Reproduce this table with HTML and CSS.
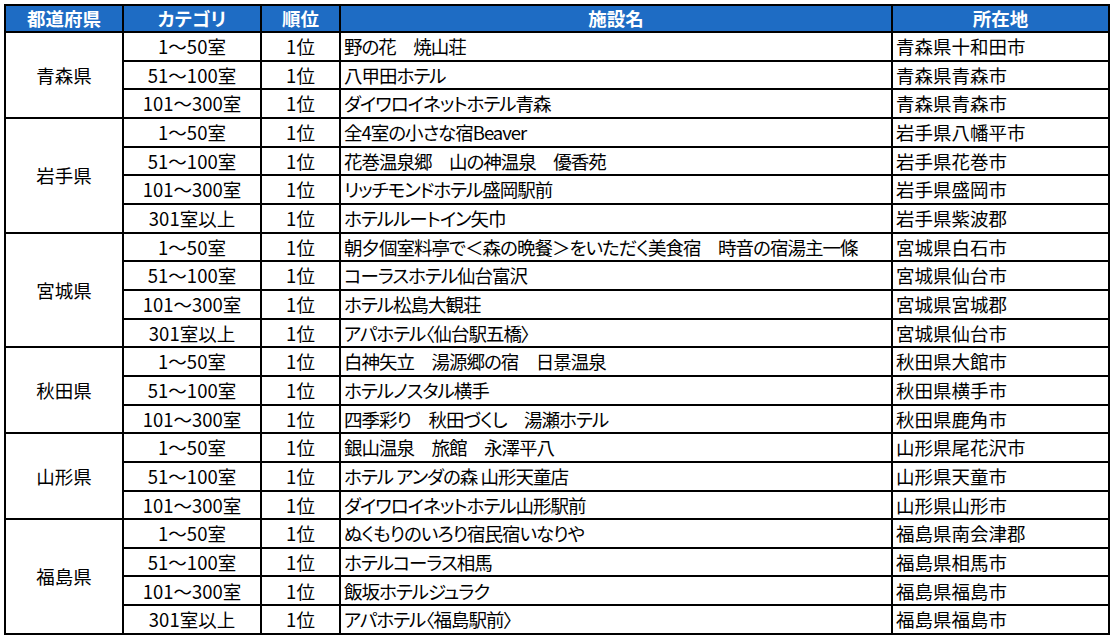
FILE: index.html
```html
<!DOCTYPE html>
<html lang="ja">
<head>
<meta charset="utf-8">
<title>都道府県別ランキング</title>
<link rel="stylesheet" href="styles.css">
</head>
<body>
<table class="rank">
  <colgroup>
    <col class="c-pref"><col class="c-cat"><col class="c-rank"><col class="c-name"><col class="c-loc">
  </colgroup>
  <thead>
    <tr><th>都道府県</th><th>カテゴリ</th><th>順位</th><th>施設名</th><th>所在地</th></tr>
  </thead>
  <tbody>
    <tr><td class="pref" rowspan="3">青森県</td><td class="ctr">1～50室</td><td class="ctr">1位</td><td class="txt name">野の花　焼山荘</td><td class="txt">青森県十和田市</td></tr>
    <tr><td class="ctr">51～100室</td><td class="ctr">1位</td><td class="txt name">八甲田ホテル</td><td class="txt">青森県青森市</td></tr>
    <tr><td class="ctr">101～300室</td><td class="ctr">1位</td><td class="txt name">ダイワロイネットホテル青森</td><td class="txt">青森県青森市</td></tr>

    <tr><td class="pref" rowspan="4">岩手県</td><td class="ctr">1～50室</td><td class="ctr">1位</td><td class="txt name">全4室の小さな宿Beaver</td><td class="txt">岩手県八幡平市</td></tr>
    <tr><td class="ctr">51～100室</td><td class="ctr">1位</td><td class="txt name">花巻温泉郷　山の神温泉　優香苑</td><td class="txt">岩手県花巻市</td></tr>
    <tr><td class="ctr">101～300室</td><td class="ctr">1位</td><td class="txt name">リッチモンドホテル盛岡駅前</td><td class="txt">岩手県盛岡市</td></tr>
    <tr><td class="ctr">301室以上</td><td class="ctr">1位</td><td class="txt name">ホテルルートイン矢巾</td><td class="txt">岩手県紫波郡</td></tr>

    <tr><td class="pref" rowspan="4">宮城県</td><td class="ctr">1～50室</td><td class="ctr">1位</td><td class="txt name">朝夕個室料亭で＜森の晩餐＞をいただく美食宿　時音の宿湯主一條</td><td class="txt">宮城県白石市</td></tr>
    <tr><td class="ctr">51～100室</td><td class="ctr">1位</td><td class="txt name">コーラスホテル仙台富沢</td><td class="txt">宮城県仙台市</td></tr>
    <tr><td class="ctr">101～300室</td><td class="ctr">1位</td><td class="txt name">ホテル松島大観荘</td><td class="txt">宮城県宮城郡</td></tr>
    <tr><td class="ctr">301室以上</td><td class="ctr">1位</td><td class="txt name">アパホテル〈仙台駅五橋〉</td><td class="txt">宮城県仙台市</td></tr>

    <tr><td class="pref" rowspan="3">秋田県</td><td class="ctr">1～50室</td><td class="ctr">1位</td><td class="txt name">白神矢立　湯源郷の宿　日景温泉</td><td class="txt">秋田県大館市</td></tr>
    <tr><td class="ctr">51～100室</td><td class="ctr">1位</td><td class="txt name">ホテルノスタル横手</td><td class="txt">秋田県横手市</td></tr>
    <tr><td class="ctr">101～300室</td><td class="ctr">1位</td><td class="txt name">四季彩り　秋田づくし　湯瀬ホテル</td><td class="txt">秋田県鹿角市</td></tr>

    <tr><td class="pref" rowspan="3">山形県</td><td class="ctr">1～50室</td><td class="ctr">1位</td><td class="txt name">銀山温泉　旅館　永澤平八</td><td class="txt">山形県尾花沢市</td></tr>
    <tr><td class="ctr">51～100室</td><td class="ctr">1位</td><td class="txt name">ホテル アンダの森 山形天童店</td><td class="txt">山形県天童市</td></tr>
    <tr><td class="ctr">101～300室</td><td class="ctr">1位</td><td class="txt name">ダイワロイネットホテル山形駅前</td><td class="txt">山形県山形市</td></tr>

    <tr><td class="pref" rowspan="4">福島県</td><td class="ctr">1～50室</td><td class="ctr">1位</td><td class="txt name">ぬくもりのいろり宿民宿いなりや</td><td class="txt">福島県南会津郡</td></tr>
    <tr><td class="ctr">51～100室</td><td class="ctr">1位</td><td class="txt name">ホテルコーラス相馬</td><td class="txt">福島県相馬市</td></tr>
    <tr><td class="ctr">101～300室</td><td class="ctr">1位</td><td class="txt name">飯坂ホテルジュラク</td><td class="txt">福島県福島市</td></tr>
    <tr><td class="ctr">301室以上</td><td class="ctr">1位</td><td class="txt name">アパホテル〈福島駅前〉</td><td class="txt">福島県福島市</td></tr>
  </tbody>
</table>
</body>
</html>
```

FILE: styles.css
```css
html, body {
  margin: 0;
  padding: 0;
  background: #ffffff;
}

body {
  padding: 4px 0 0 4px;
  font-family: "Noto Sans CJK JP", "Noto Sans", sans-serif;
  color: #000000;
}

.rank {
  border-collapse: collapse;
  table-layout: fixed;
  width: 1104px;
  font-size: 18.5px;
  line-height: 1;
  font-feature-settings: "palt";
}

.c-pref { width: 118px; }
.c-cat { width: 138px; }
.c-rank { width: 79px; }
.c-name { width: 552px; }
.c-loc { width: 217px; }

.rank th,
.rank td {
  border: 2px solid #000000;
  padding: 0;
  white-space: nowrap;
  overflow: hidden;
}

.rank th {
  height: 25px;
  background: #1e6cc4;
  color: #ffffff;
  font-weight: 700;
  text-align: center;
  vertical-align: middle;
}

.rank td {
  height: 26.67px;
  vertical-align: middle;
}

.rank .ctr {
  text-align: center;
}

.rank .txt {
  text-align: left;
  padding-left: 3px;
}

.rank .name {
  letter-spacing: -1px;
}

.rank .pref {
  text-align: center;
}
```
